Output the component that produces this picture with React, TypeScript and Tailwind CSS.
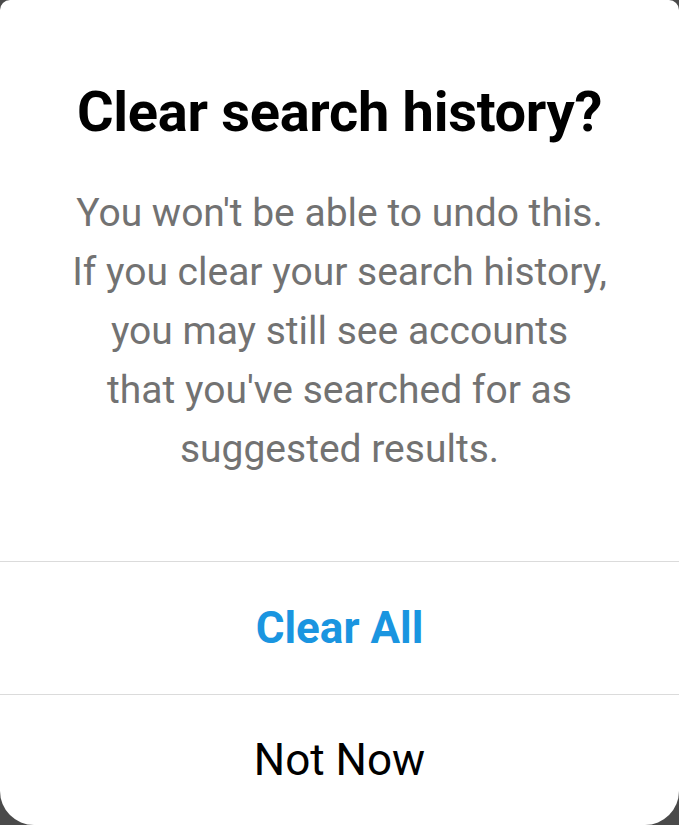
export default function App() {
  return (
    <div className="h-[825px] w-[679px] overflow-hidden bg-[#4a4a4a]" style={{ fontFamily: 'Roboto, "Noto Sans", sans-serif' }}>
      <div className="flex h-full flex-col rounded-t-[10px] rounded-b-[34px] bg-white">
        <div className="flex h-[561px] flex-col items-center pt-[78px]">
          <h1 className="text-[56px] font-bold leading-[68px] tracking-[-0.3px] text-black">Clear search history?</h1>
          <p className="mt-[38px] text-center text-[39px] leading-[59px] text-[#727272]">
            You won't be able to undo this.
            <br />
            If you clear your search history,
            <br />
            you may still see accounts
            <br />
            that you've searched for as
            <br />
            suggested results.
          </p>
        </div>
        <button className="flex h-[133px] items-center justify-center border-t border-[#dbdbdb] text-[44px] font-bold text-[#1a95e0]">
          Clear All
        </button>
        <button className="flex h-[131px] items-center justify-center border-t border-[#dbdbdb] text-[44px] text-black">
          Not Now
        </button>
      </div>
    </div>
  )
}
